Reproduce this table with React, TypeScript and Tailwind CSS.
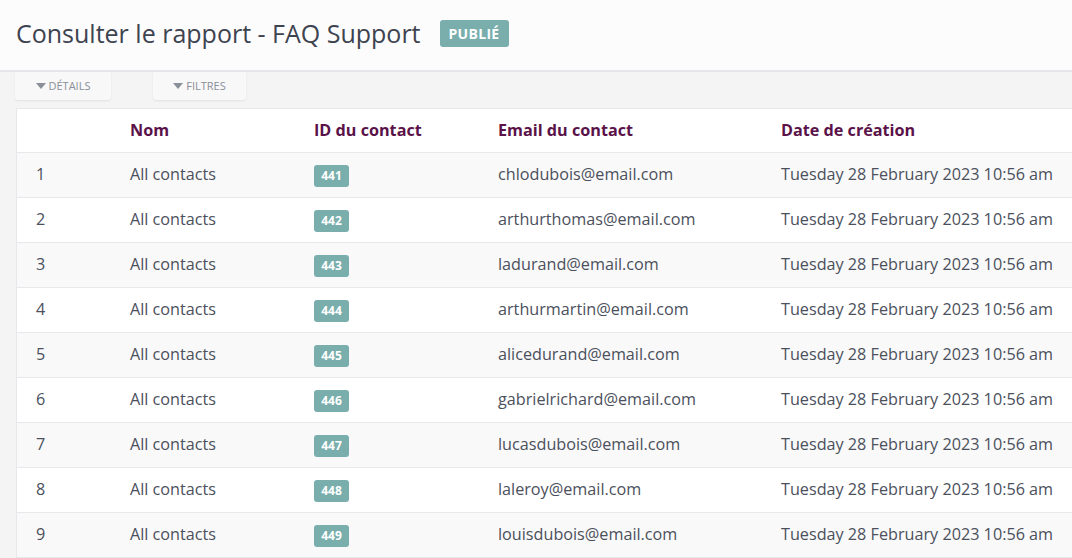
import React from "react";

const ROWS = [
  { n: 1, id: 441, email: "chlodubois@email.com" },
  { n: 2, id: 442, email: "arthurthomas@email.com" },
  { n: 3, id: 443, email: "ladurand@email.com" },
  { n: 4, id: 444, email: "arthurmartin@email.com" },
  { n: 5, id: 445, email: "alicedurand@email.com" },
  { n: 6, id: 446, email: "gabrielrichard@email.com" },
  { n: 7, id: 447, email: "lucasdubois@email.com" },
  { n: 8, id: 448, email: "laleroy@email.com" },
  { n: 9, id: 449, email: "louisdubois@email.com" },
];

const DATE = "Tuesday 28 February 2023 10:56 am";

function Caret() {
  return (
    <svg width="10" height="6" viewBox="0 0 10 6" className="mr-[3px]">
      <path d="M0 0h10L5 6z" fill="#8a8f99" />
    </svg>
  );
}

export default function App() {
  return (
    <div className="w-[1072px] h-[558px] overflow-hidden bg-[#f4f4f5] font-['Open_Sans',sans-serif]">
      <header className="h-[72px] bg-[#fcfcfc] border-b-2 border-[#e6e6ea] flex items-center pl-[16px] pb-[3px]">
        <h1 className="text-[25px] text-[#3e4350] leading-none">Consulter le rapport - FAQ Support</h1>
        <span className="ml-[19px] bg-[#79aead] text-white text-[14px] font-bold px-[9px] h-[27px] flex items-center rounded-[3px] tracking-[0.3px]">
          PUBLIÉ
        </span>
      </header>

      <div className="flex gap-[42px] pl-[15px] h-[36px]">
        <button className="w-[96px] h-[28px] bg-[#f8f8f8] rounded-b-[3px] shadow-[0_1px_2px_rgba(0,0,0,0.08)] flex items-center justify-center text-[11px] text-[#8a8f99] uppercase">
          <Caret />
          Détails
        </button>
        <button className="w-[93px] h-[28px] bg-[#f8f8f8] rounded-b-[3px] shadow-[0_1px_2px_rgba(0,0,0,0.08)] flex items-center justify-center text-[11px] text-[#8a8f99] uppercase">
          <Caret />
          Filtres
        </button>
      </div>

      <div className="ml-[16px] bg-white border-l border-t border-[#e8e8ec]">
        <table className="w-full border-collapse text-left">
          <thead>
            <tr className="h-[43px] border-b border-[#e8e8ec]">
              <th className="w-[113px]"></th>
              <th className="w-[184px] text-[16.2px] font-bold text-[#5a1249]">Nom</th>
              <th className="w-[184px] text-[16.2px] font-bold text-[#5a1249]">ID du contact</th>
              <th className="w-[283px] text-[16.2px] font-bold text-[#5a1249]">Email du contact</th>
              <th className="text-[16.2px] font-bold text-[#5a1249]">Date de création</th>
            </tr>
          </thead>
          <tbody>
            {ROWS.map((r) => (
              <tr
                key={r.n}
                className={`h-[45px] border-b border-[#e8e8ec] text-[16.2px] text-[#4b505c] ${
                  r.n % 2 === 1 ? "bg-[#f9f9f9]" : "bg-white"
                }`}
              >
                <td className="pl-[19px]">{r.n}</td>
                <td>All contacts</td>
                <td>
                  <span className="inline-flex items-center justify-center w-[35px] h-[22px] rounded-[3px] bg-[#79aead] text-white text-[12px] font-bold align-middle">
                    {r.id}
                  </span>
                </td>
                <td>{r.email}</td>
                <td className="whitespace-nowrap">{DATE}</td>
              </tr>
            ))}
          </tbody>
        </table>
      </div>
    </div>
  );
}
